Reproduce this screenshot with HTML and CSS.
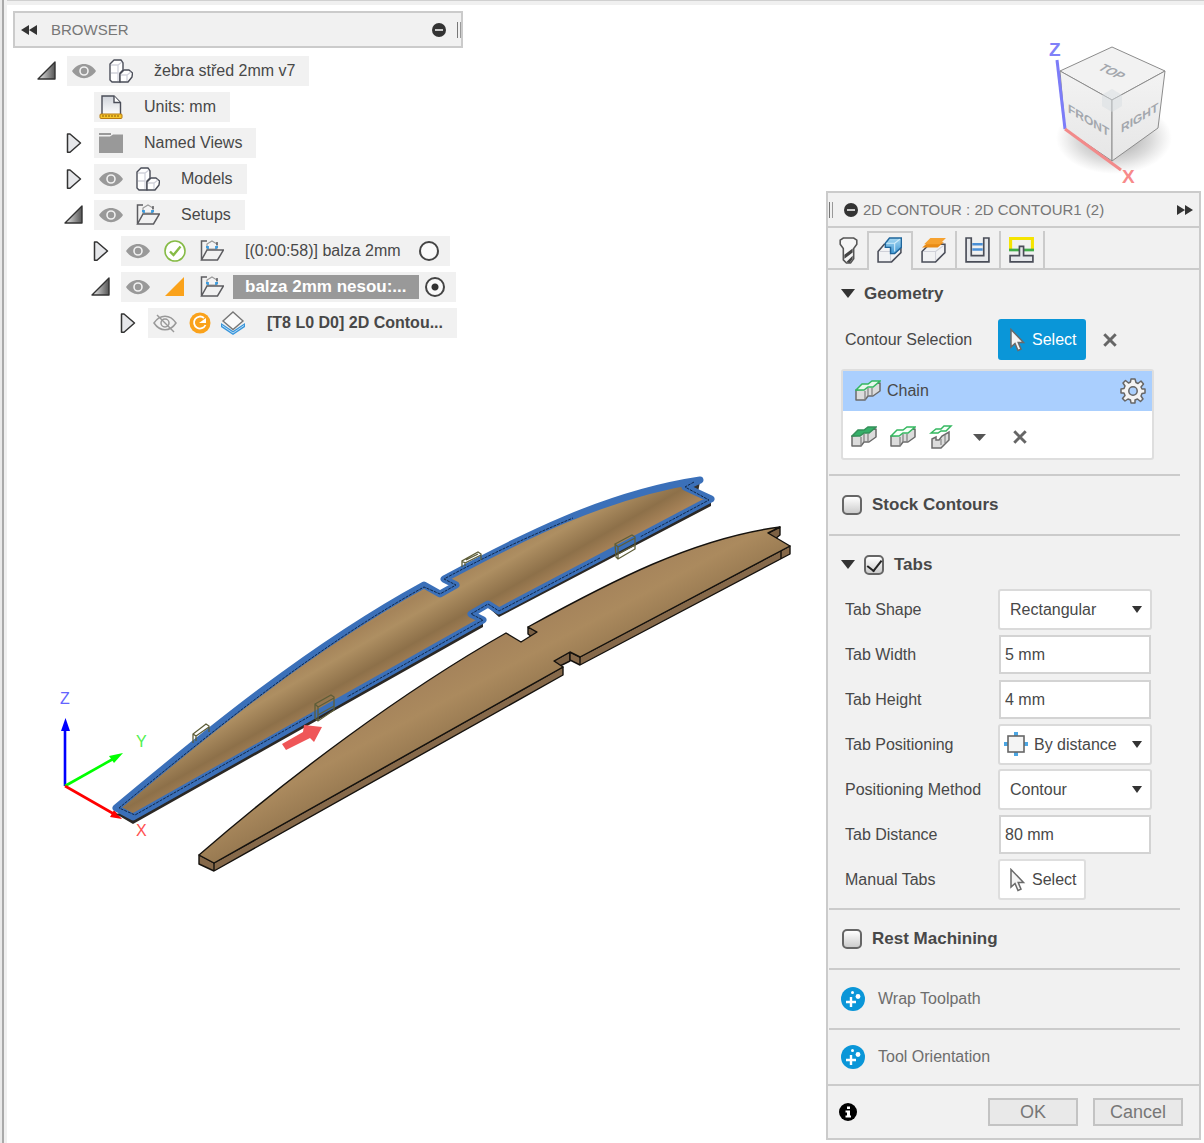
FILE: index.html
```
<!DOCTYPE html>
<html lang="en">
<head>
    <meta charset="utf-8">
    <title>2D Contour</title>
    <link rel="stylesheet" href="styles.css">
</head>
<body>
    <!-- shared icons -->
    <svg class="defs" width="0" height="0" aria-hidden="true">
        <defs>
            <linearGradient id="greyFade" x1="0" y1="0" x2="1" y2="0">
                <stop offset="0" stop-color="#eee"/><stop offset="1" stop-color="#555"/>
            </linearGradient>
            <linearGradient id="paper" x1="0" y1="0" x2="0" y2="1">
                <stop offset="0" stop-color="#cfd3da"/><stop offset="1" stop-color="#fff"/>
            </linearGradient>
            <linearGradient id="blueFace" x1="0" y1="0" x2="0" y2="1">
                <stop offset="0" stop-color="#a6d8f2"/><stop offset="1" stop-color="#3f97d3"/>
            </linearGradient>
        </defs>
        <symbol id="open" viewBox="0 0 20 20">
            <path d="M1 18 L18 1 V18 Z" fill="url(#greyFade)" stroke="#333" stroke-width="1.4" stroke-linejoin="round"/>
        </symbol>
        <symbol id="closed" viewBox="0 0 20 20">
            <path d="M3.500 1 H6 L16.500 10 L6 19.200 H3.500 Z" fill="#e6e7ea" stroke="#333" stroke-width="1.500" stroke-linejoin="round"/>
        </symbol>
        <symbol id="eye" viewBox="0 0 24 24">
            <path d="M0 12 C6 2.500 18 2.500 24 12 C18 21.500 6 21.500 0 12 Z" fill="#999"/>
            <circle cx="12" cy="12" r="4" fill="#999" stroke="#f1f1f1" stroke-width="1.600"/>
        </symbol>
        <symbol id="eyeOff" viewBox="0 0 24 24">
            <g fill="none" stroke="#999" stroke-width="1.500">
                <path d="M1 12 C7 3 17 3 23 12 C17 21 7 21 1 12 Z"/>
                <circle cx="12" cy="12" r="4"/>
                <path d="M4 4 L21 21"/>
            </g>
        </symbol>
        <symbol id="bodies" viewBox="0 0 24 24">
            <g stroke="#4a4d58" stroke-width="1.400" stroke-linejoin="round">
                <path d="M1 5 L5 1 H12 L14 4 V11 L11 14 V23 H3 L1 21 Z" fill="#fff"/>
                <path d="M11 23 V15 L15 11 H20 L23.500 14 L23 18 L19 23 Z" fill="#fff"/>
            </g>
            <path d="M2 6 H9 L13 3 M2 14 H9 M9 6 V22 M12 16 H18 L22 13 M18 16 V22" fill="none" stroke="#d2d3dc" stroke-width="1.300"/>
        </symbol>
        <symbol id="folder" viewBox="0 0 24 24">
            <path d="M12 2 L17 5 V10 H7 V5 Z" fill="#f4f4f5" stroke="#999" stroke-width="1.200"/>
            <path d="M6 8 H8 V10 M18 8 H16 V10" fill="none" stroke="#3e9bdc" stroke-width="1.800"/>
            <path d="M1.500 21 V2 H7 M17 3 V6 M1.500 21 L7 11 H23.500 L17.500 21 Z" fill="none" stroke="#5c5c60" stroke-width="1.500"/>
        </symbol>
        <symbol id="contour" viewBox="0 0 26 24">
            <path d="M1 11 V21 L10 21 L13 17 L18 17 L25 12 V4 L14 5 L9 10 Z" fill="#dcdcdc" stroke="#6b6b6b" stroke-width="1.500" stroke-linejoin="round"/>
            <path d="M10 12 V21 M13 9 V17 M17 9 V17" stroke="#808080" stroke-width="1.200"/>
        </symbol>
        <symbol id="cursor" viewBox="0 0 18 24">
            <path d="M3 1.500 V19 L7 15.500 L10 22.500 L13 21.200 L10.200 14.500 H15.500 Z" fill="#f4f4f4" stroke="#6a6a6a" stroke-width="1.500"/>
        </symbol>
        <symbol id="minus" viewBox="0 0 14 14">
            <circle cx="7" cy="7" r="7" fill="#333"/><path d="M3 7 H11" stroke="#f1f1f1" stroke-width="1.600"/>
        </symbol>
        <symbol id="cross" viewBox="0 0 14 14">
            <path d="M2 2 L12 12 M12 2 L2 12" stroke="#666" stroke-width="2.600"/>
        </symbol>
        <symbol id="addFeature" viewBox="0 0 24 24">
            <circle cx="12" cy="12" r="12" fill="#0a96d8"/>
            <path d="M10 10 V20 M5 15 H15" stroke="#fff" stroke-width="2.400"/>
            <circle cx="17" cy="9.500" r="2.400" fill="#fff"/><circle cx="11.500" cy="5.500" r="1.500" fill="#fff"/>
        </symbol>
    </svg>

    <main class="workspace">
        <svg class="scene" viewBox="50 460 760 430" aria-label="Model view">
            <defs>
                <linearGradient id="wood" gradientUnits="userSpaceOnUse" x1="385" y1="615" x2="420" y2="676" spreadMethod="reflect">
                    <stop offset="0" stop-color="#a5845a"/><stop offset=".2" stop-color="#ae8f62"/><stop offset=".55" stop-color="#8d7049"/>
                    <stop offset=".8" stop-color="#a98459"/><stop offset="1" stop-color="#a07c54"/>
                </linearGradient>
                <linearGradient id="wood2" gradientUnits="userSpaceOnUse" x1="480" y1="640" x2="515" y2="705" spreadMethod="reflect">
                    <stop offset="0" stop-color="#a3815a"/><stop offset=".5" stop-color="#ab8a5e"/><stop offset="1" stop-color="#967850"/>
                </linearGradient>
            </defs>

            <!-- triad -->
            <g stroke-width="2.600">
                <path d="M65 786 V728" stroke="#00f"/><path d="M61 731 L65.500 718 L70 731 Z" fill="#00f"/>
                <path d="M65 786 L113 759" stroke="#0f0"/><path d="M109 756 L123 753 L114 763 Z" fill="#0f0"/>
                <path d="M65 786 L114 814" stroke="#f00"/><path d="M114 810 L122 819 L110 817 Z" fill="#f00"/>
            </g>
            <g class="axis-label">
                <text x="60" y="704" fill="#6464ff">Z</text>
                <text x="136" y="747" fill="#50f050">Y</text>
                <text x="136" y="836" fill="#ff5050">X</text>
            </g>

            <!-- selected rib -->
            <path d="M116 814 L133 824 L483 627 V618 L133 810 Z M489 608 L499 617 L711 506 V497 Z" fill="#2b2825"/>
            <path d="M685 487 L698 492 L700 482 Z" fill="#33302c"/>
            <g stroke-linejoin="round">
                <path d="M116 808 C207 732 312 646 424 585 L440 594 L456 585 L444 579 C520 538 606 494 700 480 L685 487 L711 499 L499 611 L488 604 L471 614 L483 620 L133 817 Z" fill="url(#wood)" stroke="#3b70b9" stroke-width="7"/>
                <path d="M119 808 C209 734 314 648 424 587 L440 594 L456 585 L444 579 C490 554 530 536 573 518" fill="none" stroke="#10284a" stroke-dasharray="3 1"/>
                <path d="M694 482 L685 487 L709 500 L640 537 M600 558 L499 611 L488 604 L471 614 L483 620 L347 697 M312 715 L135 815 L119 808" fill="none" stroke="#10284a" stroke-dasharray="3 1"/>
            </g>
            <g fill="none" stroke="#5d5d38" stroke-width="1.300">
                <path d="M193 743 V734 L206 724 L209 726 V732 M193 734 L196 736 L209 727 M196 736 V741"/>
                <path d="M462 567 V561 L478 552 L481 554 V560 M462 561 L465 563 L481 555 M465 563 V566 M466 560 L478 554"/>
                <path d="M615 544 L632 535 L635 537 V549 L618 559 L616 557 Z M615 544 L618 547 L635 538 M618 547 V559 M618 554 L635 545"/>
                <path d="M315 704 L331 695 L334 697 V710 L318 721 L315 718 Z M315 704 L318 707 L334 698 M318 707 V720 M318 715 L334 706"/>
            </g>
            <path d="M282 744 L303 732 L304 725 L322 727 L314 742 L310 738 L286 750 Z" fill="#ef5658"/>

            <!-- second rib -->
            <g stroke="#15120e" stroke-width="1.400" stroke-linejoin="round">
                <path d="M199 855 L214 863 L563 667 V675 L214 871 L199 864 Z" fill="#86694a"/>
                <path d="M554 661 L570 652 V661 L560 666 Z" fill="#7c6144"/>
                <path d="M570 652 L580 657 L790 546 V554 L580 665 L570 660 Z" fill="#86694a"/>
                <path d="M768 533 L780 527 V535 L775 539 Z" fill="#7c6144"/>
                <path d="M528 627 V634 L532 637 L537 632 Z" fill="#7c6144"/>
                <path d="M199 855 C290 776 402 692 506 633 L521 642 L537 632 L528 627 C610 582 694 538 780 527 L768 533 L790 546 L580 657 L570 652 L554 661 L563 667 L214 863 Z" fill="url(#wood2)"/>
                <path d="M214 863 V871 M580 657 V665 M781 551 V559" fill="none"/>
            </g>
        </svg>

        <section class="browser">
            <header class="bar">
                <button class="icon-btn" aria-label="Collapse">
                    <svg width="16" height="10" viewBox="0 0 16 10"><path d="M8 0 V10 L0 5 Z M16 0 V10 L8 5 Z" fill="#333"/></svg>
                </button>
                <h2>BROWSER</h2>
                <button class="icon-btn push" aria-label="Hide browser"><svg width="14" height="14"><use href="#minus"/></svg></button>
                <span class="grip"></span>
            </header>

            <ul class="tree">
                <li>
                    <div class="row">
                        <button class="toggle" aria-label="Collapse"><svg><use href="#open"/></svg></button>
                        <div class="node"><svg><use href="#eye"/></svg><svg><use href="#bodies"/></svg><span class="name">žebra střed 2mm v7</span></div>
                    </div>
                    <ul>
                        <li><div class="row">
                            <span class="toggle"></span>
                            <div class="node">
                                <svg viewBox="0 0 24 24"><path d="M3 20 V1 H15 L21.500 7.500 V20 Z" fill="url(#paper)" stroke="#4a4d58" stroke-width="1.400"/><path d="M15 1 V7.500 H21" fill="#fff" stroke="#4a4d58" stroke-width="1.400"/><rect x="1" y="19" width="22" height="4.500" rx="1" fill="#f6c52c" stroke="#b5790f"/><path d="M4 20 V22 M7 20 V22 M10 20 V22 M13 20 V22 M16 20 V22 M19 20 V22" stroke="#8b5c08"/></svg>
                                <span class="name">Units: mm</span>
                            </div>
                        </div></li>
                        <li><div class="row">
                            <button class="toggle" aria-label="Expand"><svg><use href="#closed"/></svg></button>
                            <div class="node">
                                <svg viewBox="0 0 24 24"><path d="M0 2 H12 V4 H0 Z M0 5.500 H11 L14 3.500 H24 V22 H0 Z" fill="#999"/></svg>
                                <span class="name">Named Views</span>
                            </div>
                        </div></li>
                        <li><div class="row">
                            <button class="toggle" aria-label="Expand"><svg><use href="#closed"/></svg></button>
                            <div class="node"><svg><use href="#eye"/></svg><svg><use href="#bodies"/></svg><span class="name">Models</span></div>
                        </div></li>
                        <li>
                            <div class="row">
                                <button class="toggle" aria-label="Collapse"><svg><use href="#open"/></svg></button>
                                <div class="node"><svg><use href="#eye"/></svg><svg><use href="#folder"/></svg><span class="name">Setups</span></div>
                            </div>
                            <ul>
                                <li><div class="row">
                                    <button class="toggle" aria-label="Expand"><svg><use href="#closed"/></svg></button>
                                    <div class="node">
                                        <svg><use href="#eye"/></svg>
                                        <svg viewBox="0 0 24 24"><circle cx="12" cy="12" r="10" fill="#fff" stroke="#86bb46" stroke-width="1.600"/><path d="M7 12.500 L10.500 16 L17.500 7.500" fill="none" stroke="#86bb46" stroke-width="2.400"/></svg>
                                        <svg><use href="#folder"/></svg>
                                        <label class="name" for="setup1">[(0:00:58)] balza 2mm</label>
                                        <input type="radio" name="setup" id="setup1">
                                    </div>
                                </div></li>
                                <li>
                                    <div class="row">
                                        <button class="toggle" aria-label="Collapse"><svg><use href="#open"/></svg></button>
                                        <div class="node">
                                            <svg><use href="#eye"/></svg>
                                            <svg viewBox="0 0 24 24"><path d="M2 21 L21 2 V21 Z" fill="#faa21b"/></svg>
                                            <svg><use href="#folder"/></svg>
                                            <label class="name selected" for="setup2">balza 2mm nesou:...</label>
                                            <input type="radio" name="setup" id="setup2" checked>
                                        </div>
                                    </div>
                                    <ul>
                                        <li><div class="row">
                                            <button class="toggle" aria-label="Expand"><svg><use href="#closed"/></svg></button>
                                            <div class="node tight">
                                                <svg><use href="#eyeOff"/></svg>
                                                <svg viewBox="0 0 24 24"><circle cx="13" cy="12" r="10.500" fill="#faa21b"/><path d="M17 7 A6 6 0 1 0 18.500 14" fill="none" stroke="#fff" stroke-width="1.800"/><path d="M12 12 H19 V7 Z" fill="#fff"/></svg>
                                                <svg viewBox="0 0 24 24"><path d="M0 12 V16 L12 24 L24 16 V12 L12 20 Z" fill="#3795dc"/><path d="M1 14.500 L12 22 L23 14.500" fill="none" stroke="#b8dcf4"/><path d="M12 1 L22 10 L12 18.500 L2 10 Z" fill="#fafafa" stroke="#777" stroke-width="1.400"/></svg>
                                                <span class="name strong">[T8 L0 D0] 2D Contou...</span>
                                            </div>
                                        </div></li>
                                    </ul>
                                </li>
                            </ul>
                        </li>
                    </ul>
                </li>
            </ul>
        </section>

        <div class="side">
            <svg class="cube" viewBox="1034 30 140 160" aria-label="View cube">
                <defs>
                    <radialGradient id="shadow"><stop offset="0" stop-color="#777" stop-opacity=".8"/><stop offset=".65" stop-color="#999" stop-opacity=".35"/><stop offset="1" stop-color="#aaa" stop-opacity="0"/></radialGradient>
                    <linearGradient id="faceShade" x1="0" y1="0" x2="0" y2="1"><stop offset="0" stop-color="#f3f3f3"/><stop offset="1" stop-color="#e6e6e6"/></linearGradient>
                </defs>
                <ellipse cx="1114" cy="138" rx="58" ry="36" fill="url(#shadow)"/>
                <g stroke="#8c8c8c" stroke-width="1">
                    <path d="M1060 71 L1112 47 L1165 71 L1112 100 Z" fill="#f2f2f2"/>
                    <path d="M1060 71 L1112 100 V161 L1065 129 Z" fill="url(#faceShade)"/>
                    <path d="M1165 71 L1112 100 V161 L1158 128 Z" fill="url(#faceShade)"/>
                </g>
                <path d="M1102 95 L1112 89 L1122 95 V106 L1112 112 L1102 106 Z" fill="#d8dde2" fill-opacity=".5"/>
                <path d="M1057 60 L1065 129" stroke="#7c7cf8" stroke-width="3"/>
                <path d="M1065 129 L1121 170" stroke="#f28a8a" stroke-width="3"/>
                <g class="face">
                    <text transform="translate(1068 112) skewY(31)">FRONT</text>
                    <text transform="translate(1121 133) skewY(-31)">RIGHT</text>
                    <text transform="translate(1097 69) rotate(26) skewX(-30)">TOP</text>
                </g>
                <g class="cube-axis">
                    <text x="1049" y="56" fill="#8080f8">Z</text>
                    <text x="1122" y="183" fill="#f78a8a">X</text>
                </g>
            </svg>

            <form class="panel">
                <header class="bar">
                    <span class="grip"></span>
                    <button type="button" class="icon-btn" aria-label="Hide"><svg width="14" height="14"><use href="#minus"/></svg></button>
                    <h2>2D CONTOUR : 2D CONTOUR1 (2)</h2>
                    <button type="button" class="icon-btn push" aria-label="Dock"><svg width="16" height="10" viewBox="0 0 16 10"><path d="M0 0 V10 L8 5 Z M8 0 V10 L16 5 Z" fill="#333"/></svg></button>
                </header>

                <nav class="tabs">
                    <button type="button" aria-label="Tool">
                        <svg viewBox="0 0 24 26"><path d="M4 3 L7 1 H17 L20 3 V7 L17 11 V21 L14 25 H10 L7 22 V11 L4 7 Z" fill="#f5f5f5" stroke="#555" stroke-width="1.500"/><path d="M8 17 L16 11 V15 L8 21 Z M10 24 L16 18 V21 L13 25 Z" fill="#444"/></svg>
                    </button>
                    <button type="button" class="active" aria-label="Geometry">
                        <svg viewBox="0 0 24 26"><path d="M1 14 L7 7 H23 V15 L14 24 H1 Z" fill="#f1f2f4" stroke="#4a4d58" stroke-width="1.500"/><path d="M2 14 H13 V23" fill="none" stroke="#cfd0d8"/><path d="M8 6 L12 1 H23.500 V10 L17 16 H13 V10 H8 Z" fill="url(#blueFace)" stroke="#1f659b" stroke-width="1.400"/><path d="M9 6 H17 V14 M17 6 L22 2" fill="none" stroke="#d1edfa"/></svg>
                    </button>
                    <button type="button" aria-label="Heights">
                        <svg viewBox="0 0 24 26"><path d="M1 14 L8 7 H23 V15 L14 24 H1 Z" fill="#f1f2f4" stroke="#4a4d58" stroke-width="1.500"/><path d="M2 14 H14 L22 8 M14 14 V23" fill="none" stroke="#cfd0d8"/><path d="M1 10 L7 5 H22 L16 10 Z" fill="#e98b16"/><path d="M3 7 L9 1 H24 L18 7 Z" fill="#f6a230"/></svg>
                    </button>
                    <button type="button" aria-label="Passes">
                        <svg viewBox="0 0 24 26"><path d="M1 1 H6 V18 H18 V1 H23 V24 H1 Z" fill="#e6e8eb" stroke="#4a4d58" stroke-width="1.600"/><path d="M7 7 H17 M7 12 H17" stroke="#4a8fd6" stroke-width="2.400"/></svg>
                    </button>
                    <button type="button" aria-label="Linking">
                        <svg viewBox="0 0 24 26"><path d="M1.500 13 V1.500 H22.500 V13" fill="none" stroke="#f5e400" stroke-width="3"/><path d="M0 12.500 H24" stroke="#41ad49" stroke-width="2.600"/><path d="M10 9 H14 V18 H23 V24 H1 V18 H10 Z" fill="#e6e8eb" stroke="#4a4d58" stroke-width="1.600"/></svg>
                    </button>
                </nav>

                <div class="sections">
                    <section class="geometry">
                        <h3><span class="arrow"></span>Geometry</h3>
                        <div class="field">
                            <span>Contour Selection</span>
                            <div class="pick">
                                <button type="button" class="select-btn primary"><svg width="18" height="24"><use href="#cursor"/></svg>Select</button>
                                <button type="button" class="icon-btn" aria-label="Clear selection"><svg width="16" height="16"><use href="#cross"/></svg></button>
                            </div>
                        </div>
                        <div class="chains">
                            <div class="chain">
                                <svg width="26" height="24" viewBox="0 0 26 24"><use href="#contour" width="26" height="24"/><path d="M1 11 L7 5 H13 L17 2 H25 L18 8 H13 L9 11 Z" fill="#e8f7ec" stroke="#35b860" stroke-width="1.500"/></svg>
                                <span>Chain</span>
                                <button type="button" class="icon-btn push" aria-label="Chain settings">
                                    <svg width="26" height="26" viewBox="-13 -13 26 26"><g fill="#f4f4f4" stroke="#666" stroke-width="1.500" stroke-linejoin="round"><path d="M-2 -12 H2 L3 -8.500 L5 -7.500 L8 -10 L10.500 -7 L8 -4 L9 -2 L12 -2 V2 L9 2.500 L8 5 L10 8 L7.500 10.500 L4.500 8 L2 9 V12 H-2 L-2.500 9 L-5 8 L-8 10 L-10.500 7.500 L-8 4.500 L-9 2 L-12 2 V-2 L-9 -2.500 L-8 -5 L-10 -8 L-7.500 -10.500 L-4.500 -8 L-2.500 -9 Z"/><circle r="4.200" fill="#acd0fd"/></g></svg>
                                </button>
                            </div>
                            <div class="chain-tools">
                                <button type="button" class="icon-btn" aria-label="Face contours"><svg width="26" height="24" viewBox="0 0 26 24"><use href="#contour" width="26" height="24"/><path d="M1 11 L7 5 H13 L17 2 H25 L18 8 H13 L9 11 Z" fill="#35b069" stroke="#35905a" stroke-width="1.500"/></svg></button>
                                <button type="button" class="icon-btn" aria-label="Add chain"><svg width="26" height="24" viewBox="0 0 26 24"><use href="#contour" width="26" height="24"/><path d="M1 11 L7 5 H13 L17 2 H25 L18 8 H13 L9 11 Z" fill="#f6fff8" stroke="#35b860" stroke-width="1.500"/></svg></button>
                                <button type="button" class="icon-btn" aria-label="Silhouette"><svg width="26" height="24" viewBox="0 0 26 24"><path d="M3 14 L7 12 V15 H10 L13 11 L20 7 V15 L12 23 H3 Z" fill="#dcdcdc" stroke="#6b6b6b" stroke-width="1.500"/><path d="M12 14 V20 M16 10 V18" fill="none" stroke="#777"/><path d="M2 8 L7 4 H12 L15 1 H22 L17 6 H12 L9 8 Z" fill="#f6fff8" stroke="#35b860" stroke-width="1.500"/></svg></button>
                                <button type="button" class="icon-btn" aria-label="More"><svg width="26" height="24" viewBox="0 0 26 24"><path d="M5 9 H18 L11.500 16 Z" fill="#555"/></svg></button>
                                <button type="button" class="icon-btn" aria-label="Remove"><svg width="26" height="16"><use href="#cross"/></svg></button>
                            </div>
                        </div>
                    </section>

                    <section class="option">
                        <label><input type="checkbox">Stock Contours</label>
                    </section>

                    <section class="tab-settings">
                        <h3><span class="arrow"></span><label><input type="checkbox" checked>Tabs</label></h3>
                        <div class="field">
                            <label for="shape">Tab Shape</label>
                            <div class="dropdown"><select id="shape"><option>Rectangular</option><option>Triangular</option></select></div>
                        </div>
                        <div class="field">
                            <label for="width">Tab Width</label>
                            <input type="text" id="width" value="5 mm">
                        </div>
                        <div class="field">
                            <label for="height">Tab Height</label>
                            <input type="text" id="height" value="4 mm">
                        </div>
                        <div class="field">
                            <label for="positioning">Tab Positioning</label>
                            <div class="dropdown with-icon">
                                <svg class="lead" width="24" height="24" viewBox="0 0 24 24"><path d="M10 0 H14 V4 H10 Z M10 20 H14 V24 H10 Z M0 10 H4 V14 H0 Z M20 10 H24 V14 H20 Z" fill="#4ba6e3"/><rect x="4" y="4" width="16" height="16" fill="#f4f4f4" stroke="#666" stroke-width="1.600"/></svg>
                                <select id="positioning"><option>By distance</option><option>At points</option></select>
                            </div>
                        </div>
                        <div class="field">
                            <label for="method">Positioning Method</label>
                            <div class="dropdown"><select id="method"><option>Contour</option></select></div>
                        </div>
                        <div class="field">
                            <label for="distance">Tab Distance</label>
                            <input type="text" id="distance" value="80 mm">
                        </div>
                        <div class="field">
                            <span>Manual Tabs</span>
                            <div class="pick"><button type="button" class="select-btn"><svg width="18" height="24"><use href="#cursor"/></svg>Select</button></div>
                        </div>
                    </section>

                    <section class="option">
                        <label><input type="checkbox">Rest Machining</label>
                    </section>
                    <section class="option">
                        <button type="button" class="feature"><svg width="24" height="24"><use href="#addFeature"/></svg>Wrap Toolpath</button>
                    </section>
                    <section class="option last">
                        <button type="button" class="feature"><svg width="24" height="24"><use href="#addFeature"/></svg>Tool Orientation</button>
                    </section>
                </div>

                <footer>
                    <button type="button" class="icon-btn" aria-label="Info">
                        <svg width="18" height="18" viewBox="0 0 18 18"><circle cx="9" cy="9" r="9" fill="#000"/><path d="M8 3.500 H11 V6 H8 Z M6.500 7.500 H11 V12.500 H12 V14.500 H6.500 V12.500 H8 V9.500 H6.500 Z" fill="#fff"/></svg>
                    </button>
                    <button type="submit" class="action" disabled>OK</button>
                    <button type="button" class="action">Cancel</button>
                </footer>
            </form>
        </div>
    </main>
</body>
</html>
```
FILE: styles.css
```
* {
    box-sizing: border-box;
}

body {
    margin: 0;
    background-color: #e9e9e9;
    color: #484848;
    font-family: "Liberation Sans", Arial, sans-serif;
    font-size: 16px;
    line-height: 20px;
}

h2, h3, ul {
    margin: 0;
    padding: 0;
}

svg {
    display: block;
    flex: none;
}

button, input, select {
    font: inherit;
    color: inherit;
    margin: 0;
}

.defs {
    position: absolute;
}

.workspace {
    position: relative;
    display: flex;
    justify-content: space-between;
    align-items: flex-start;
    min-height: 100vh;
    margin-left: 2px;
    padding: 5px 3px 0 9px;
    border-left: 2px solid #a9a9a9;
    background-color: #fff;
    box-shadow: inset 3px 0 0 #f0f0f0, inset 0 1px 0 #d0d0d0, inset 0 5px 0 #f0f0f0;
}

/* model canvas lies under the panels */
.scene {
    position: absolute;
    left: 46px;
    top: 460px;
    width: 760px;
    height: 430px;
}

.axis-label {
    font-size: 16px;
}

/* header bars */
.bar {
    display: flex;
    align-items: center;
    height: 35px;
}

.bar h2 {
    font-size: 15px;
    font-weight: normal;
    color: #777;
}

.icon-btn {
    display: flex;
    padding: 0;
    border: none;
    background: none;
    cursor: pointer;
}

.push {
    margin-left: auto;
}

.grip {
    width: 4px;
    height: 16px;
    border-left: 1px solid #777;
    border-right: 1px solid #999;
}

/* browser */
.browser {
    position: relative;
    width: 450px;
    margin-top: 6px;
}

.browser .bar {
    height: 37px;
    padding: 0 0 0 6px;
    border: 2px solid #cbcbcb;
    background-color: #f1f1f1;
}

.browser .bar h2 {
    margin-left: 14px;
}

.browser .grip {
    margin-left: 11px;
}

.tree {
    padding: 8px 0 0 24px;
}

.tree ul {
    padding-left: 27px;
}

.tree li {
    list-style: none;
}

.row {
    display: flex;
    align-items: center;
    gap: 10px;
    margin-bottom: 6px;
}

.toggle {
    width: 20px;
    height: 20px;
    padding: 0;
    border: none;
    background: none;
}

.toggle svg {
    width: 20px;
    height: 20px;
}

.node {
    display: flex;
    align-items: center;
    gap: 13px;
    height: 30px;
    padding: 0 14px 0 5px;
    background-color: #f1f1f1;
    white-space: nowrap;
}

.node.tight {
    gap: 10px;
}

.node svg {
    width: 24px;
    height: 24px;
}

.node .name {
    margin-left: 8px;
}

.node.tight .name {
    margin-left: 12px;
}

.node .selected {
    margin: 0 -12px 0 -4px;
    padding: 2px 12px;
    background-color: #999;
    color: #fff;
    font-size: 17px;
    font-weight: bold;
}

.strong {
    font-weight: bold;
}

input[type="radio"] {
    appearance: none;
    width: 20px;
    height: 20px;
    margin-left: 5px;
    margin-right: -3px;
    border: 2px solid #444;
    border-radius: 50%;
    background-color: #fafafa;
}

input[type="radio"]:checked {
    background-image: radial-gradient(circle, #333 0 3px, transparent 4px);
}

/* right column */
.side {
    position: relative;
    width: 375px;
}

.cube {
    width: 140px;
    height: 160px;
    margin: 25px 27px 1px auto;
}

.face {
    font-size: 12px;
    font-weight: bold;
    fill: #a3a7ad;
}

.cube-axis {
    font-size: 19px;
    font-weight: bold;
}

.panel {
    border: 2px solid #cbcbcb;
    background-color: #f1f1f1;
}

.panel .bar {
    padding: 0 6px 0 1px;
    border-bottom: 2px solid #cbcbcb;
}

.panel .bar h2 {
    margin-left: 5px;
}

.panel .grip {
    margin-right: 11px;
}

.tabs {
    display: flex;
    height: 42px;
    padding-top: 3px;
    box-shadow: inset 0 -2px 0 #cbcbcb;
}

.tabs button {
    width: 44px;
    padding: 4px 8px;
    border: none;
    border-right: 2px solid #cbcbcb;
    background: none;
}

.tabs button:first-child {
    width: 41px;
}

.tabs button.active {
    border-top: 2px solid #cbcbcb;
    background-color: #f1f1f1;
    padding-top: 2px;
}

.tabs svg {
    width: 25px;
    height: 27px;
}

.sections {
    margin: 0 19px 0 1px;
}

.sections section {
    border-bottom: 2px solid #cbcbcb;
}

.sections h3 {
    display: flex;
    align-items: center;
    height: 47px;
    padding-left: 12px;
    font-size: 17px;
}

.arrow {
    margin-right: 9px;
    border: 7px solid transparent;
    border-top: 9px solid #333;
    border-bottom: none;
}

.field {
    display: grid;
    grid-template-columns: 153px 154px;
    align-items: center;
    height: 45px;
    padding-left: 16px;
}

.pick {
    display: flex;
    align-items: center;
    gap: 16px;
}

.select-btn {
    display: flex;
    align-items: center;
    gap: 6px;
    width: 88px;
    height: 41px;
    padding: 0 8px;
    border: 2px solid #dedede;
    border-radius: 3px;
    background-color: #fff;
}

.select-btn.primary {
    border-color: #0a96d8;
    background-color: #0a96d8;
    color: #fff;
}

.geometry {
    padding-bottom: 14px;
}

.chains {
    width: 313px;
    margin: 7px 0 0 12px;
    border: 2px solid #dedede;
    border-radius: 3px;
    background-color: #fff;
}

.chain {
    display: flex;
    align-items: center;
    gap: 6px;
    height: 40px;
    padding: 0 6px 0 12px;
    background-color: #aacffe;
}

.chain-tools {
    display: flex;
    align-items: center;
    gap: 13px;
    height: 47px;
    padding: 5px 0 0 8px;
}

.option {
    display: flex;
    align-items: center;
    height: 60px;
    padding-left: 13px;
}

.option label, h3 label {
    display: flex;
    align-items: center;
    gap: 10px;
    font-size: 17px;
    font-weight: bold;
}

.sections .last {
    height: 54px;
    border-bottom: none;
}

input[type="checkbox"] {
    appearance: none;
    width: 20px;
    height: 20px;
    border: 2px solid #666;
    border-radius: 5px;
    background: linear-gradient(#fff, #ccc);
}

input[type="checkbox"]:checked {
    display: grid;
    place-items: center;
}

input[type="checkbox"]:checked::after {
    content: "";
    width: 7px;
    height: 12px;
    margin-bottom: 3px;
    border: solid #222;
    border-width: 0 2px 2px 0;
    transform: rotate(38deg);
}

.tab-settings {
    padding-bottom: 6px;
}

.sections .tab-settings h3 {
    height: 51px;
    padding-top: 6px;
}

input[type="text"] {
    height: 39px;
    margin: 0 1px;
    padding: 0 4px;
    border: 2px solid #d3d3d3;
    background-color: #fff;
}

.dropdown {
    position: relative;
}

.dropdown select {
    appearance: none;
    width: 100%;
    height: 41px;
    padding: 0 20px 0 10px;
    border: 2px solid #dadada;
    border-radius: 3px;
    background-color: #fff;
}

.dropdown.with-icon select {
    padding-left: 34px;
}

.dropdown::after {
    content: "";
    position: absolute;
    right: 10px;
    top: 17px;
    border: 5px solid transparent;
    border-top: 7px solid #333;
    border-bottom: none;
    pointer-events: none;
}

.lead {
    position: absolute;
    left: 6px;
    top: 8px;
    pointer-events: none;
}

.feature {
    display: flex;
    align-items: center;
    gap: 13px;
    padding: 0;
    margin-left: -1px;
    border: none;
    background: none;
    color: #6d6d6d;
}

.panel footer {
    display: flex;
    align-items: center;
    gap: 15px;
    height: 54px;
    padding: 0 16px 0 11px;
    border-top: 2px solid #cbcbcb;
}

.action {
    width: 90px;
    height: 28px;
    padding: 0;
    border: 2px solid #c3c3c3;
    background-color: #e9e9e9;
    color: #777;
    font-size: 18px;
}

footer .icon-btn {
    margin-right: auto;
}
```
